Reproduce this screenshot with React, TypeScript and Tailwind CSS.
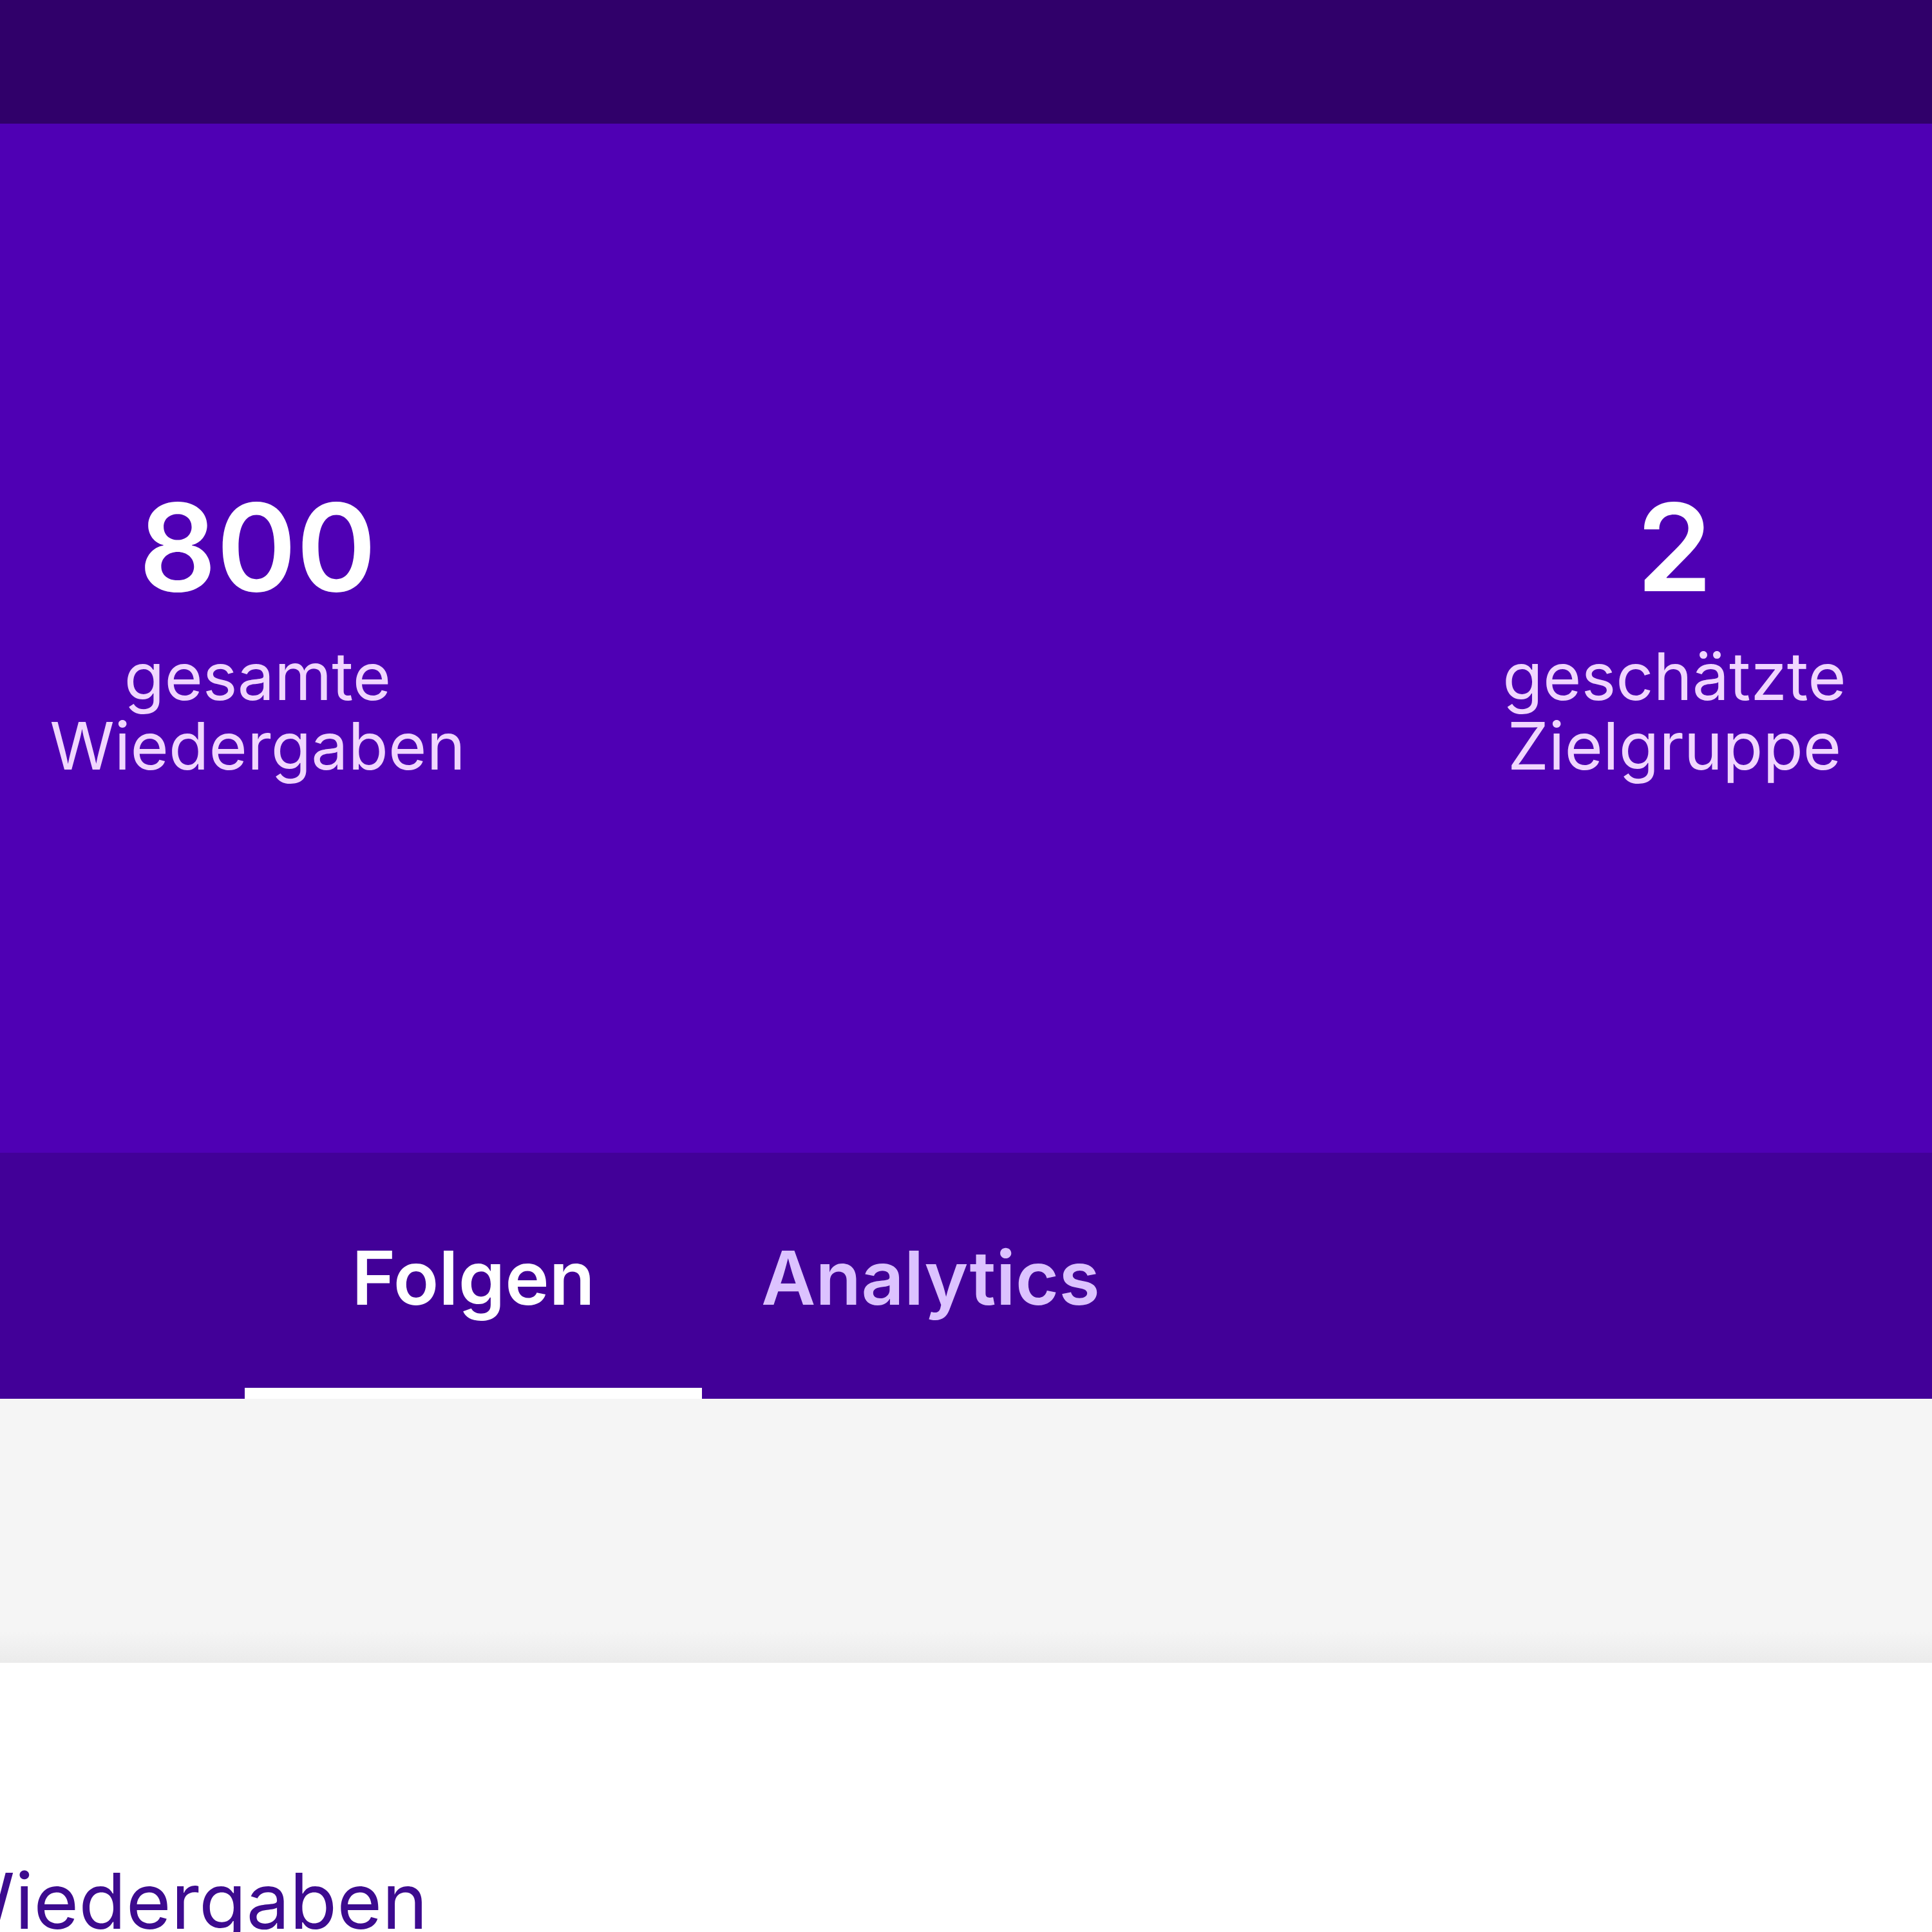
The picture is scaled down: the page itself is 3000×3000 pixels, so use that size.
import React from 'react';

const stats = [
  { value: '800', label: ['gesamte', 'Wiedergaben'] },
  { value: '2', label: ['geschätzte', 'Zielgruppe'] },
];

const tabs = [
  { name: 'Folgen', active: true },
  { name: 'Analytics', active: false },
];

export default function App() {
  return (
    <div className="w-[3000px] h-[3000px] overflow-hidden bg-white font-['Inter',sans-serif]">
      <div className="h-[192px] bg-[#30006a]" />

      <div className="h-[1598px] bg-[#4f00b4] flex items-center justify-between">
        {stats.map((s) => (
          <div key={s.value} className="w-[800px] -mt-[20px] flex flex-col items-center text-center">
            <p className="text-[188px] leading-[200px] font-semibold text-white">{s.value}</p>
            <p className="mt-[46px] text-[102px] leading-[108px] text-[#f1d6ff]">
              {s.label[0]}
              <br />
              {s.label[1]}
            </p>
          </div>
        ))}
      </div>

      <div className="h-[382px] bg-[#420098] flex pl-[380px]">
        {tabs.map((t) => (
          <div
            key={t.name}
            className={
              'w-[710px] flex items-center justify-center border-b-[17px] ' +
              (t.active ? 'border-white text-white' : 'border-transparent text-[#dcc2ff]')
            }
          >
            <span className="text-[116px] font-semibold pt-[22px]">{t.name}</span>
          </div>
        ))}
      </div>

      <div className="h-[410px] bg-[linear-gradient(to_bottom,#f5f5f5_0%,#f5f5f5_88%,#ebebeb_100%)]" />

      <div className="pt-[300px] overflow-hidden">
        <p className="-ml-[95px] text-[120px] leading-[140px] text-[#3d0b8f] whitespace-nowrap">
          Wiedergaben
        </p>
      </div>
    </div>
  );
}
